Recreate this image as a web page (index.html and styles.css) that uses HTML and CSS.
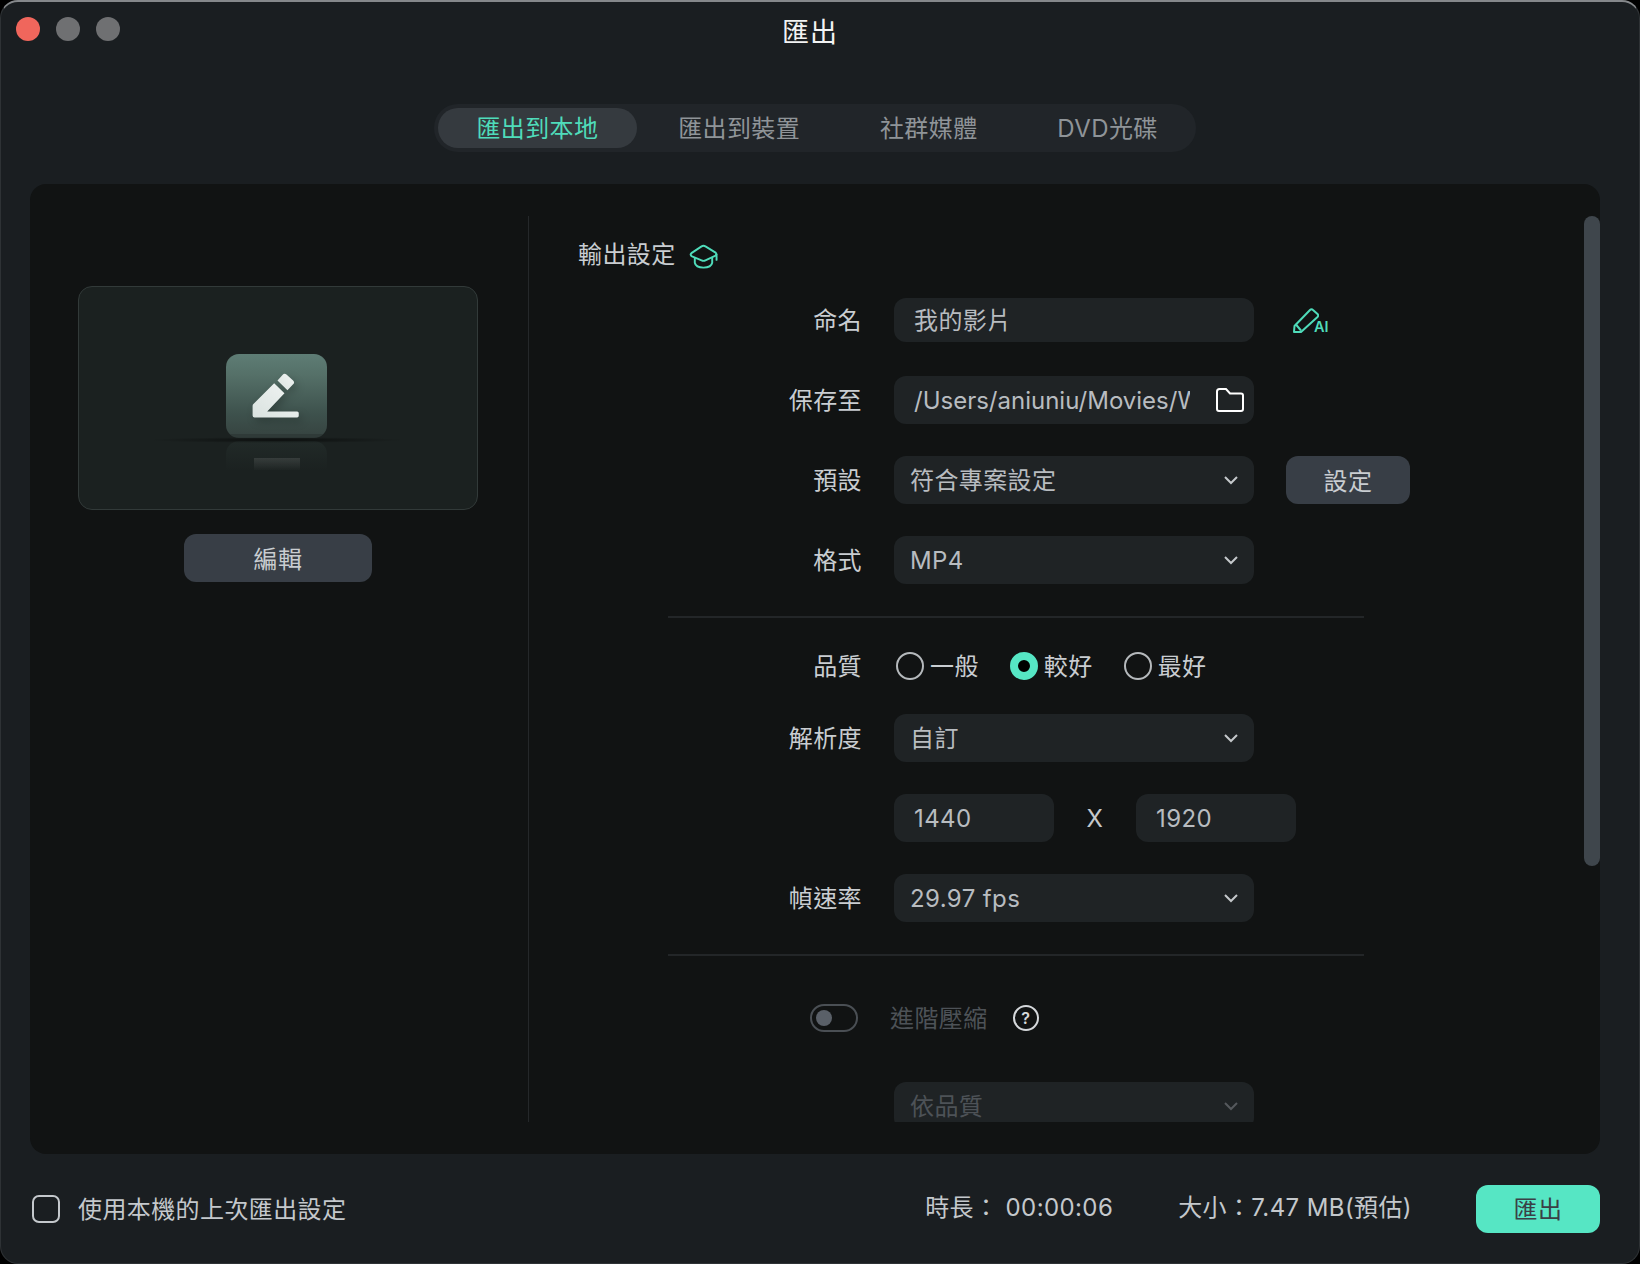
FILE: index.html
```html
<!DOCTYPE html>
<html lang="zh-Hant">
<head>
    <meta charset="UTF-8">
    <title>匯出</title>
    <link rel="stylesheet" href="styles.css">
</head>
<body>
    <div class="window">
        <div class="titlebar">
            <div class="lights">
                <span class="light red"></span>
                <span class="light"></span>
                <span class="light"></span>
            </div>
            <div class="title">匯出</div>
        </div>

        <div class="tabs">
            <div class="tab active">匯出到本地</div>
            <div class="tab">匯出到裝置</div>
            <div class="tab">社群媒體</div>
            <div class="tab">DVD光碟</div>
        </div>

        <div class="panel">
            <div class="left">
                <div class="preview">
                    <div class="tile">
                        <svg width="101" height="84" viewBox="0 0 304 253">
                            <defs>
                                <linearGradient id="pen" x1="0" y1="1" x2="1" y2="0">
                                    <stop offset="0" stop-color="#d9e2df"/>
                                    <stop offset="1" stop-color="#f2f5f4"/>
                                </linearGradient>
                            </defs>
                            <path d="M80 156 Q80 152 84 149 L145 88 L176 118 L124 173 H214 Q219 173 219 178 V186 Q219 191 214 191 H86 Q80 191 80 185 Z" fill="url(#pen)"/>
                            <path d="M155 80 L170 63 Q176 56 182 62 L202 80 Q208 86 202 91 L185 109 Z" fill="url(#pen)"/>
                        </svg>
                    </div>
                    <div class="shadow"></div>
                    <div class="reflection"><span class="reflection-bar"></span></div>
                </div>
                <div class="btn edit-btn">編輯</div>
            </div>

            <div class="right">
                <div class="heading">
                    <span class="cjk">輸出設定</span>
                    <svg class="hat" width="29" height="25" viewBox="0 0 30 25" fill="none" stroke="#4fdcba" stroke-width="2" stroke-linecap="round" stroke-linejoin="round">
                        <path d="M13 2 Q15 .8 17 2 L27.5 8.5 Q29 10 27.5 11.5 L17 16.5 Q15 17.5 13 16.5 L2.5 12 Q1 10.5 2.5 9 Z"/>
                        <path d="M6 14 V19 Q7 24 15 24 Q23 24 24 19 V14"/>
                        <path d="M28.5 10.5 V16"/>
                    </svg>
                </div>

                <div class="form">
                    <div class="row name-row">
                        <div class="label">命名</div>
                        <div class="field text-field name-field"><span class="cjk">我的影片</span></div>
                        <div class="ai-icon">
                            <svg width="26" height="26" viewBox="0 0 26 26" fill="none" stroke="#4fdcba" stroke-width="2" stroke-linejoin="round">
                                <path d="M1 25 L1.5 19 L17 3 Q18.5 1.5 20 3 L24.5 7 Q26 8.5 24.5 10 L8 25 Z"/>
                                <path d="M2.5 17 L8 23.5"/>
                            </svg>
                            <span class="ai-text">AI</span>
                        </div>
                    </div>
                    <div class="row">
                        <div class="label">保存至</div>
                        <div class="field text-field path-field">
                            <span class="path lat">/Users/aniuniu/Movies/Wondershare</span>
                            <svg width="28" height="24" viewBox="0 0 28 24" fill="none" stroke="#fff" stroke-width="2">
                                <path d="M1 3.5 Q1 1 3.5 1 H10 L14 5.5 H25 Q27 5.5 27 7.5 V21 Q27 23 25 23 H3 Q1 23 1 21 Z"/>
                            </svg>
                        </div>
                    </div>
                    <div class="row">
                        <div class="label">預設</div>
                        <div class="field select">
                            <span class="cjk">符合專案設定</span>
                            <svg class="chev" width="16" height="10" viewBox="0 0 16 10"><path d="M2 2 L8 8 L14 2"/></svg>
                        </div>
                        <div class="btn set-btn">設定</div>
                    </div>
                    <div class="row">
                        <div class="label">格式</div>
                        <div class="field select">
                            <span class="lat">MP4</span>
                            <svg class="chev" width="16" height="10" viewBox="0 0 16 10"><path d="M2 2 L8 8 L14 2"/></svg>
                        </div>
                    </div>

                    <div class="rule"></div>

                    <div class="row quality-row">
                        <div class="label">品質</div>
                        <div class="radios">
                            <div class="radio"><span class="dot"></span><span class="cjk">一般</span></div>
                            <div class="radio on"><span class="dot"></span><span class="cjk">較好</span></div>
                            <div class="radio"><span class="dot"></span><span class="cjk">最好</span></div>
                        </div>
                    </div>
                    <div class="row">
                        <div class="label">解析度</div>
                        <div class="field select">
                            <span class="cjk">自訂</span>
                            <svg class="chev" width="16" height="10" viewBox="0 0 16 10"><path d="M2 2 L8 8 L14 2"/></svg>
                        </div>
                    </div>
                    <div class="row">
                        <div class="label"></div>
                        <div class="field text-field size-field"><span class="lat">1440</span></div>
                        <div class="times">X</div>
                        <div class="field text-field size-field"><span class="lat">1920</span></div>
                    </div>
                    <div class="row">
                        <div class="label">幀速率</div>
                        <div class="field select">
                            <span class="lat">29.97 fps</span>
                            <svg class="chev" width="16" height="10" viewBox="0 0 16 10"><path d="M2 2 L8 8 L14 2"/></svg>
                        </div>
                    </div>

                    <div class="rule"></div>

                    <div class="compress-row">
                        <span class="toggle"><span class="knob"></span></span>
                        <span class="muted cjk">進階壓縮</span>
                        <span class="help">?</span>
                    </div>
                    <div class="row clipped-row">
                        <div class="label"></div>
                        <div class="field select disabled">
                            <span class="cjk">依品質</span>
                            <svg class="chev" width="16" height="10" viewBox="0 0 16 10"><path d="M2 2 L8 8 L14 2"/></svg>
                        </div>
                    </div>
                </div>
            </div>

            <div class="scrollbar"></div>
        </div>

        <div class="footer">
            <span class="checkbox"></span>
            <span class="remember">使用本機的上次匯出設定</span>
            <span class="duration">時長：&nbsp;00:00:06</span>
            <span class="filesize">大小：7.47 MB(預估)</span>
            <div class="export-btn">匯出</div>
        </div>
    </div>
</body>
</html>
```

FILE: styles.css
```css
html, body {
    margin: 0;
    background: #000;
}
body {
    font-family: Inter, "Noto Sans CJK TC", sans-serif;
    font-size: 24px;
    letter-spacing: .4px;
    color: #c9cdd1;
}
.cjk {
    padding-bottom: 3px;
}
.lat {
    padding-top: 1px;
}
.window {
    box-sizing: border-box;
    width: 1640px;
    height: 1264px;
    display: flex;
    flex-direction: column;
    background: #1a1e21;
    border: 1px solid #2e3235;
    border-top: 2px solid #85888b;
    border-radius: 18px;
    overflow: hidden;
}

/* title bar */
.titlebar {
    height: 62px;
    display: grid;
    grid-template-columns: 1fr auto 1fr;
    align-items: center;
}
.lights {
    grid-column: 1;
    display: flex;
    gap: 16px;
    padding: 0 0 8px 15px;
}
.light {
    width: 24px;
    height: 24px;
    border-radius: 50%;
    background: #6f7072;
}
.light.red {
    background: #f0665c;
}
.title {
    grid-column: 2;
    font-size: 27px;
    letter-spacing: 1px;
    color: #f2f3f3;
    margin: 0 20px 6px 0;
}

/* tabs */
.tabs {
    align-self: flex-start;
    margin: 40px 0 0 433px;
    display: flex;
    gap: 3px;
    padding: 4px 0 4px 4px;
    background: #212529;
    border-radius: 24px;
}
.tab {
    height: 40px;
    line-height: 42px;
    padding: 0 38.4px;
    border-radius: 20px;
    color: #8f9498;
}
.tab.active {
    background: #353a3f;
    color: #4fdcba;
}

/* main panel */
.panel {
    position: relative;
    margin: 32px 39px 0 29px;
    height: 970px;
    box-sizing: border-box;
    padding: 32px 0;
    display: flex;
    background: #111313;
    border-radius: 16px;
}
.left {
    width: 498px;
    flex: none;
    display: flex;
    flex-direction: column;
    align-items: center;
    padding: 70px 2px 0 0;
    box-sizing: border-box;
}
.preview {
    position: relative;
    box-sizing: border-box;
    width: 400px;
    height: 224px;
    padding: 67px 3px 0 0;
    display: flex;
    flex-direction: column;
    align-items: center;
    background: #1b2120;
    border: 1px solid #323a39;
    border-radius: 14px;
}
.tile {
    width: 101px;
    height: 84px;
    flex: none;
    border-radius: 13px;
    background: linear-gradient(#5e7d75 0%, #557068 25%, #3e524d 70%, #374542 95%, #2f3a38 95%);
}
.tile svg {
    display: block;
    filter: drop-shadow(3px 4px 4px rgba(0,0,0,.22));
}
.shadow {
    position: absolute;
    left: 70px;
    top: 150px;
    width: 256px;
    height: 6px;
    background: radial-gradient(closest-side, rgba(0,0,0,.55), rgba(0,0,0,0));
}
.reflection {
    width: 101px;
    height: 30px;
    margin-top: 3px;
    box-sizing: border-box;
    padding-top: 17px;
    display: flex;
    justify-content: center;
    border-radius: 13px 13px 0 0;
    background: linear-gradient(rgba(90,120,112,.1), rgba(90,120,112,0));
}
.reflection-bar {
    width: 46px;
    height: 12px;
    background: linear-gradient(rgba(255,255,255,.11), rgba(255,255,255,.01));
}
.btn {
    height: 48px;
    line-height: 51px;
    text-align: center;
    background: #383e46;
    border-radius: 12px;
    color: #c9cdd1;
}
.edit-btn {
    width: 188px;
    margin-top: 24px;
}
.right {
    flex: 1;
    height: 906px;
    overflow: hidden;
    border-left: 1px solid #25282a;
}
.heading {
    display: flex;
    align-items: center;
    gap: 13px;
    height: 36px;
    margin: 20px 0 0 49px;
}
.hat {
    margin-top: 4px;
}

/* form rows */
.form {
    margin: 26px 0 0 139px;
    display: flex;
    flex-direction: column;
    gap: 32px;
}
.row {
    display: flex;
    align-items: center;
}
.name-row {
    margin-bottom: 2px;
}
.label {
    box-sizing: border-box;
    width: 194px;
    min-height: 1px;
    padding-bottom: 3px;
    margin-right: 32px;
    flex: none;
    text-align: right;
}
.field {
    box-sizing: border-box;
    width: 360px;
    height: 48px;
    flex: none;
    display: flex;
    align-items: center;
    justify-content: space-between;
    background: #1f2325;
    border-radius: 12px;
    color: #b8bcc0;
}
.text-field {
    padding: 0 9px 0 20px;
}
.path-field {
    padding-right: 10px;
}
.name-field {
    height: 44px;
}
.path {
    width: 276px;
    overflow: hidden;
    white-space: nowrap;
    letter-spacing: 0;
}
.select {
    padding: 0 15px 0 16px;
}
.chev {
    fill: none;
    stroke: #c4c8cb;
    stroke-width: 2;
}
.size-field {
    width: 160px;
}
.times {
    width: 82px;
    text-align: center;
    color: #c4c8cb;
}
.set-btn {
    width: 124px;
    margin-left: 32px;
}
.ai-icon {
    margin-left: 39px;
    display: flex;
    align-items: flex-end;
}
.ai-icon svg {
    display: block;
}
.ai-text {
    margin-left: -5px;
    font-size: 14.5px;
    line-height: 13px;
    font-weight: 600;
    letter-spacing: 0;
    color: #4fdcba;
}
.rule {
    height: 2px;
    width: 696px;
    background: #232628;
}
.quality-row {
    height: 28px;
    margin: 2px 0;
}
.radios {
    display: flex;
    gap: 31px;
    margin-left: 2px;
}
.radio {
    display: flex;
    align-items: center;
    gap: 6px;
}
.dot {
    box-sizing: border-box;
    width: 28px;
    height: 28px;
    border: 2px solid #b5b9bc;
    border-radius: 50%;
}
.radio.on .dot {
    border: 8.5px solid #56e6c4;
    background: #000;
}
.compress-row {
    display: flex;
    align-items: center;
    height: 28px;
    margin: 16px 0 18px 142px;
}
.toggle {
    box-sizing: border-box;
    width: 48px;
    height: 28px;
    padding: 4px;
    display: flex;
    align-items: center;
    border: 2px solid #4a4f54;
    border-radius: 14px;
    margin-right: 32px;
}
.knob {
    width: 16px;
    height: 16px;
    border-radius: 50%;
    background: #5a6068;
}
.muted {
    color: #4d5257;
    margin-right: 25px;
}
.help {
    box-sizing: border-box;
    width: 26px;
    height: 26px;
    line-height: 22px;
    text-align: center;
    font-size: 16px;
    font-weight: 600;
    letter-spacing: 0;
    color: #d5d8db;
    border: 2px solid #d5d8db;
    border-radius: 50%;
}
.disabled {
    color: #4d5257;
}
.disabled .chev {
    stroke: #55595d;
}
.scrollbar {
    position: absolute;
    top: 32px;
    right: 0;
    width: 16px;
    height: 650px;
    border-radius: 8px;
    background: #3f464c;
}

/* footer */
.footer {
    flex: 1;
    display: flex;
    align-items: center;
    padding: 0 39px 0 31px;
    color: #c4c8cc;
}
.checkbox {
    box-sizing: border-box;
    width: 28px;
    height: 28px;
    border: 2px solid #c4c8cc;
    border-radius: 7px;
    margin-right: 18px;
}
.remember {
    padding-bottom: 3px;
}
.duration {
    margin-left: auto;
    margin-right: 65px;
    padding-bottom: 6px;
}
.filesize {
    margin-right: 64px;
    padding-bottom: 6px;
}
.export-btn {
    width: 124px;
    height: 48px;
    line-height: 50px;
    text-align: center;
    background: #56e6c4;
    border-radius: 12px;
    color: #3a4046;
}
```
